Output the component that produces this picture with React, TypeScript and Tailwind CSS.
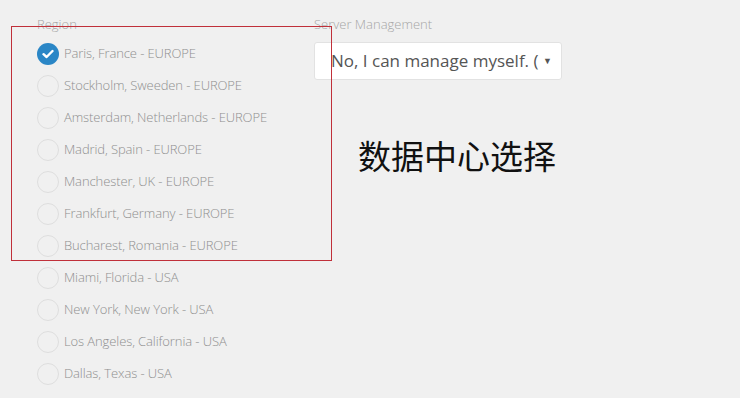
import React from "react";

const regions = [
  "Paris, France - EUROPE",
  "Stockholm, Sweeden - EUROPE",
  "Amsterdam, Netherlands - EUROPE",
  "Madrid, Spain - EUROPE",
  "Manchester, UK - EUROPE",
  "Frankfurt, Germany - EUROPE",
  "Bucharest, Romania - EUROPE",
  "Miami, Florida - USA",
  "New York, New York - USA",
  "Los Angeles, California - USA",
  "Dallas, Texas - USA",
];

export default function App() {
  return (
    <div
      className="relative w-[740px] h-[398px] overflow-hidden bg-[#f0f0f0]"
      style={{ fontFamily: '"Open Sans", "Noto Sans", sans-serif' }}
    >
      <div className="flex pl-[37px] pt-[15px]">
        <div className="w-[277px]">
          <div className="text-[13px] leading-[18px] text-[#a6a6a6] font-light">Region</div>
          <div className="mt-[5px] flex flex-col">
            {regions.map((r, i) => (
              <div key={r} className="flex items-center h-[32px]">
                {i === 0 ? (
                  <div className="w-[22px] h-[22px] rounded-full bg-[#2a86c6] flex items-center justify-center">
                    <svg width="12" height="10" viewBox="0 0 12 10">
                      <path d="M1.5 5.2 L4.6 8 L10.5 2" fill="none" stroke="#fff" strokeWidth="2.4" strokeLinecap="round" strokeLinejoin="round" />
                    </svg>
                  </div>
                ) : (
                  <div className="w-[22px] h-[22px] rounded-full border border-[#dedede] bg-[#f0f0f0]" />
                )}
                <span className="ml-[5px] text-[13px] tracking-[-0.1px] text-[#8f8f8f] font-light whitespace-nowrap">{r}</span>
              </div>
            ))}
          </div>
        </div>
        <div className="w-[248px]">
          <div className="text-[13px] leading-[18px] text-[#a6a6a6] font-light">Server Management</div>
          <div className="mt-[9px] h-[38px] bg-white border border-[#e2e2e2] rounded-[3px] flex items-center pl-[16px] pr-[9px]">
            <span className="flex-1 text-[17px] text-[#555555] whitespace-nowrap overflow-hidden">No, I can manage myself. (</span>
            <span className="text-[9px] text-[#555555]">▼</span>
          </div>
          <div
            className="mt-[56px] ml-[44px] text-[33px] leading-[38px] text-[#111111] whitespace-nowrap"
            style={{ fontFamily: '"Noto Sans CJK SC", sans-serif' }}
          >
            数据中心选择
          </div>
        </div>
      </div>
      <div className="absolute left-[11px] top-[26px] w-[321px] h-[235px] border border-[#c0303a] pointer-events-none" />
    </div>
  );
}
